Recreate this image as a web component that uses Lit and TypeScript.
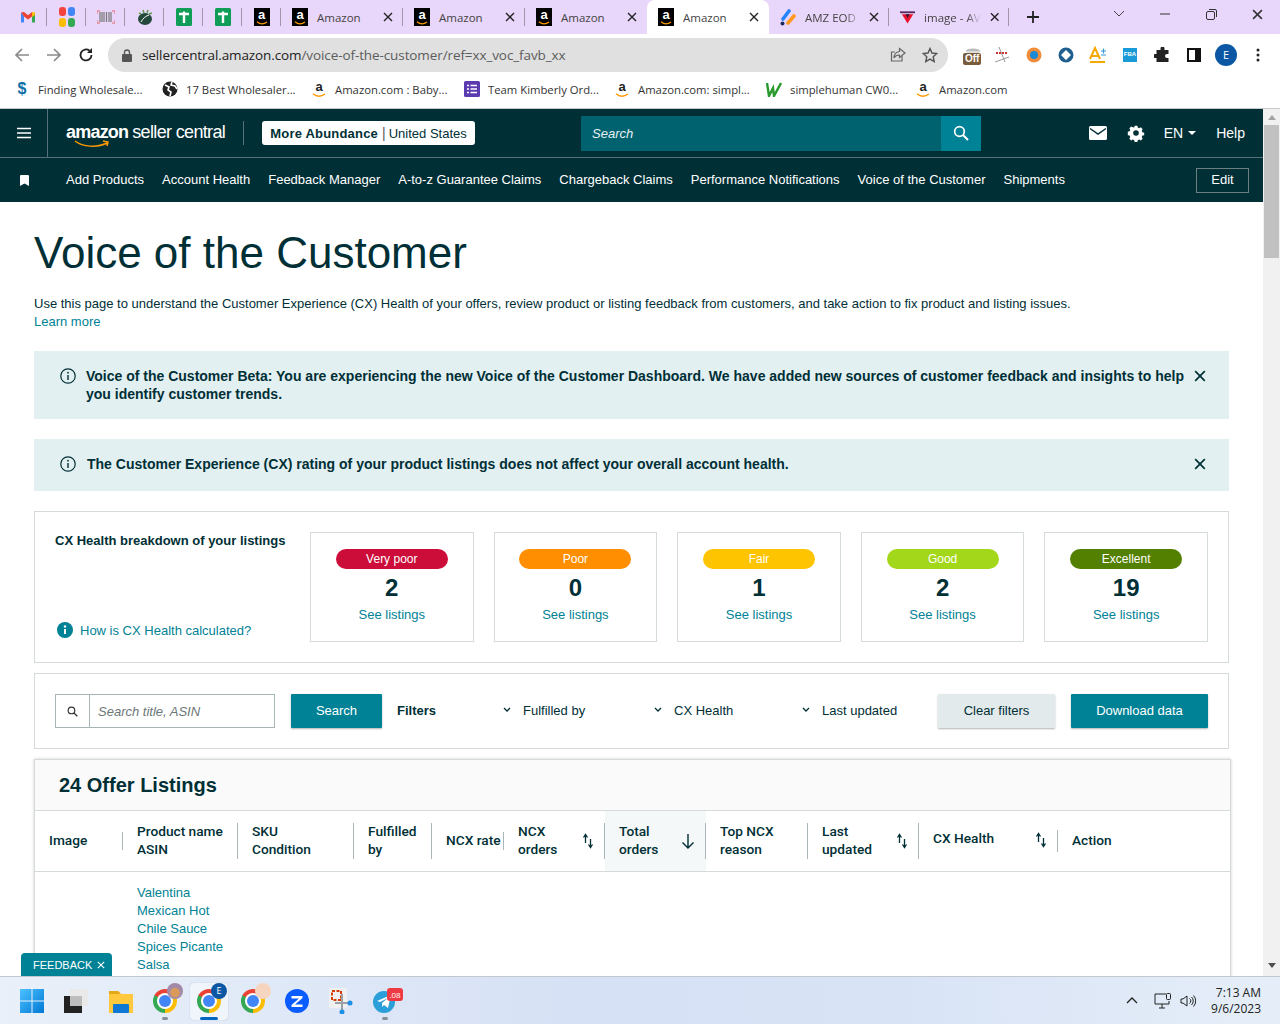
import { LitElement, css, html, svg } from "lit";
import { customElement } from "lit/decorators.js";

const amazonIcon = html`<span class="fav-a"><span>a</span><svg width="12" height="4" viewBox="0 0 12 4"><path d="M1 .8c3 2.4 7 2.4 10 .2" fill="none" stroke="#f90" stroke-width="1.3"/></svg></span>`;
const amazonPlain = html`<span class="fav-plain"><span>a</span><svg width="14" height="5" viewBox="0 0 14 5"><path d="M1 .8c3.5 3 8 3 12 .2" fill="none" stroke="#f90" stroke-width="1.5"/></svg></span>`;

const gmail = svg`<svg width="16" height="16" viewBox="0 0 16 16"><path d="M1 3.5v10h3V7z" fill="#4285f4"/><path d="M15 3.5v10h-3V7z" fill="#34a853"/><path d="M12 3l3 .5V6l-3 2z" fill="#fbbc04"/><path d="M1 3.5L4 3l4 3.2L12 3v4.5L8 10.5 4 7.5z" fill="#ea4335"/></svg>`;
const apps = svg`<svg width="18" height="20" viewBox="0 0 18 20"><rect x="1" width="7" height="9" rx="3" fill="#f4433c"/><rect x="10" width="7" height="9" rx="3" fill="#4285f4"/><rect x="1" y="11" width="7" height="9" rx="3" fill="#fbbc04"/><rect x="10" y="11" width="7" height="9" rx="3" fill="#34a853"/></svg>`;
const barcode = svg`<svg width="18" height="14" viewBox="0 0 18 14"><path d="M3 2v10M5 2v10M7 2v10M9.5 2v10M12 2v10M14 2v10" stroke="#777" stroke-width="1.2"/><path d="M0 4V1h3M15 1h3v3M18 10v3h-3M3 13H0v-3" fill="none" stroke="#e46a6a"/></svg>`;
const leaf = svg`<svg width="18" height="18" viewBox="0 0 18 18"><ellipse cx="9" cy="11" rx="7" ry="6" fill="#24483c"/><path d="M5 14c2-4 5-6 8-7" stroke="#fff" fill="none"/><path d="M3 5l2 1M7 2l1 3M12 2l-1 3M16 5l-3 1" stroke="#5d9a52" stroke-width="1.5"/></svg>`;
const greenT = svg`<svg width="16" height="18" viewBox="0 0 16 18"><rect width="16" height="18" rx="1.5" fill="#0f9d58"/><path d="M3 6h10M8 3.5V15" stroke="#fff" stroke-width="2.4"/></svg>`;
const jira = svg`<svg width="16" height="17" viewBox="0 0 16 17"><path d="M3 10L9 2" stroke="#2684ff" stroke-width="3.6" stroke-linecap="round"/><path d="M8 14l6-7" stroke="#ff991f" stroke-width="3.6" stroke-linecap="round"/><circle cx="2.5" cy="14.5" r="2" fill="#1d2c5e"/></svg>`;
const triangle = svg`<svg width="16" height="16" viewBox="0 0 16 16"><path d="M0 2h16v2H0z" fill="#5a2a5e"/><path d="M2 5h12l-6 10z" fill="#e8112d"/><path d="M6 5h4L8 9z" fill="#24123a"/></svg>`;

const closeX = (c = "#333", s = 10) =>
  svg`<svg width=${s} height=${s} viewBox="0 0 10 10"><path d="M1 1l8 8M9 1l-8 8" stroke=${c} stroke-width="1.4" fill="none"/></svg>`;

const infoOutline = svg`<svg width="16" height="16" viewBox="0 0 16 16"><circle cx="8" cy="8" r="7.2" fill="none" stroke="#002f36" stroke-width="1.2"/><path d="M8 7v5" stroke="#002f36" stroke-width="1.4"/><circle cx="8" cy="4.7" r=".9" fill="#002f36"/></svg>`;
const chevron = svg`<svg width="8" height="6" viewBox="0 0 8 6"><path d="M1 1l3 3 3-3" fill="none" stroke="#002f36" stroke-width="1.3"/></svg>`;
const sortArrows = svg`<svg width="12" height="16" viewBox="0 0 12 16"><path d="M3.5 10V2M1.5 4.5l2-3 2 3" fill="none" stroke="#002f36" stroke-width="1.3"/><path d="M8.5 6v8M6.5 11.5l2 3 2-3" fill="none" stroke="#002f36" stroke-width="1.3"/></svg>`;
const searchIcon = (c: string, s: number) =>
  svg`<svg width=${s} height=${s} viewBox="0 0 16 16"><circle cx="6.5" cy="6.5" r="4.8" fill="none" stroke=${c} stroke-width="1.7"/><path d="M10 10l5 5" stroke=${c} stroke-width="2"/></svg>`;

const pinned = [gmail, apps, barcode, leaf, greenT, greenT, amazonIcon];
const tabs = [
  { icon: amazonIcon, label: "Amazon" },
  { icon: amazonIcon, label: "Amazon" },
  { icon: amazonIcon, label: "Amazon" },
  { icon: amazonIcon, label: "Amazon", active: true },
  { icon: jira, label: "AMZ EOD", fade: true },
  { icon: triangle, label: "image - AV", fade: true },
];

const bookmarks = [
  { w: 148, icon: html`<span class="dollar">$</span>`, label: "Finding Wholesale..." },
  { w: 149, icon: svg`<svg width="16" height="16" viewBox="0 0 16 16"><circle cx="8" cy="8" r="7.5" fill="#222"/><path d="M3 4l4 2-1 3 3 2-1 4M10 1l-1 3 4 1 2 3" fill="none" stroke="#fff" stroke-width="1.6"/></svg>`, label: "17 Best Wholesaler..." },
  { w: 153, icon: amazonPlain, label: "Amazon.com : Baby..." },
  { w: 150, icon: svg`<svg width="16" height="16" viewBox="0 0 16 16"><rect width="16" height="16" rx="1.5" fill="#5b3bb0"/><path d="M6.5 4.5H13M6.5 8H13M6.5 11.5H13M3 4.5h2M3 8h2M3 11.5h2" stroke="#fff" stroke-width="1.4"/></svg>`, label: "Team Kimberly Ord..." },
  { w: 152, icon: amazonPlain, label: "Amazon.com: simpl..." },
  { w: 149, icon: svg`<svg width="16" height="16" viewBox="0 0 16 16"><path d="M1 2l2 13 4-8 1 8 7-13" fill="none" stroke="#2a9a2e" stroke-width="2.4"/></svg>`, label: "simplehuman CW0..." },
  { w: 100, icon: amazonPlain, label: "Amazon.com" },
];

const navItems = ["Add Products", "Account Health", "Feedback Manager", "A-to-z Guarantee Claims", "Chargeback Claims", "Performance Notifications", "Voice of the Customer", "Shipments"];

const ratings = [
  { label: "Very poor", count: "2", cls: "very-poor" },
  { label: "Poor", count: "0", cls: "poor" },
  { label: "Fair", count: "1", cls: "fair" },
  { label: "Good", count: "2", cls: "good" },
  { label: "Excellent", count: "19", cls: "excellent" },
];

const columns = [
  { lines: ["Image"], div: "short" },
  { lines: ["Product name", "ASIN"], div: "tall" },
  { lines: ["SKU", "Condition"], div: "tall" },
  { lines: ["Fulfilled", "by"], div: "tall" },
  { lines: ["NCX rate"], div: "short" },
  { lines: ["NCX", "orders"], div: "tall", sort: true },
  { lines: ["Total", "orders"], div: "tall", sorted: true },
  { lines: ["Top NCX", "reason"], div: "tall" },
  { lines: ["Last", "updated"], div: "tall", sort: true },
  { lines: ["CX Health"], div: "mid", sort: true, raised: true },
  { lines: ["Action"], div: "" },
];

@customElement("app-root")
export class AppRoot extends LitElement {
  static styles = css`
    :host {
      display: block;
      width: 1280px;
      height: 1024px;
      overflow: hidden;
      position: relative;
      font-family: "Liberation Sans", Arial, sans-serif;
      font-size: 13px;
      color: #002f36;
      background: #fff;
    }
    .frame { display: flex; flex-direction: column; height: 1024px; }
    a { color: #008296; text-decoration: none; }

    /* browser chrome */
    .tabstrip { height: 34px; flex: none; background: #e9d6fb; display: flex; align-items: center; padding-left: 8px; font-family: "Open Sans", sans-serif; font-size: 11.5px; color: #444; }
    .pin { width: 39px; height: 34px; display: flex; align-items: center; justify-content: center; position: relative; }
    .pin::after, .tab::after { content: ""; position: absolute; right: 0; top: 8px; height: 18px; width: 1px; background: #a596ae; }
    .tab { width: 122px; height: 34px; display: flex; align-items: center; padding: 0 10px 0 11px; box-sizing: border-box; gap: 9px; position: relative; }
    .tab.narrow { width: 120px; }
    .tab .label { flex: 1; white-space: nowrap; }
    .tab .fade { -webkit-mask-image: linear-gradient(90deg, #000 75%, transparent 100%); mask-image: linear-gradient(90deg, #000 75%, transparent 100%); }
    .tab.active { background: #fff; border-radius: 8px 8px 0 0; }
    .tab.active::after, .tab.nosep::after { display: none; }
    .fav-a { width: 16px; height: 18px; background: #000; display: flex; flex-direction: column; align-items: center; flex: none; color: #fff; font: bold 13px/13px "Liberation Sans", sans-serif; }
    .fav-plain { width: 16px; height: 18px; display: flex; flex-direction: column; align-items: center; flex: none; color: #222; font: bold 13px/13px "Liberation Sans", sans-serif; }
    .newtab { margin-left: 16px; width: 16px; height: 16px; }
    .winbtns { margin-left: auto; display: flex; align-items: center; height: 34px; padding-bottom: 6px; box-sizing: border-box; }
    .winbtns span { width: 46px; display: flex; justify-content: center; }

    .toolbar { height: 38px; flex: none; display: flex; align-items: flex-end; background: #fff; }
    .navbtns { width: 108px; height: 34px; display: flex; align-items: center; padding-left: 14px; box-sizing: border-box; gap: 16px; }
    .omni { width: 840px; height: 34px; border-radius: 17px; background: #e0e0e0; display: flex; align-items: center; box-sizing: border-box; padding: 0 10px 0 14px; font-family: "Open Sans", sans-serif; font-size: 13.5px; color: #5c5c5c; }
    .omni b { font-weight: 400; color: #222; }
    .omni .url { margin-left: 10px; flex: 1; white-space: nowrap; letter-spacing: -0.1px; }
    .omni svg { flex: none; }
    .omni .star { margin-left: 16px; }
    .exts { flex: 1; height: 34px; display: flex; align-items: center; padding-left: 6px; }
    .ext { width: 32px; height: 34px; display: flex; align-items: center; justify-content: center; position: relative; flex: none; }
    .ext.offset { left: 3px; }
    .off { position: absolute; left: 6px; top: 15px; background: #7a5c3a; color: #fff; font: bold 10px/12px "Liberation Sans", sans-serif; padding: 0 2px; border-radius: 2px; }
    .avatar { width: 22px; height: 22px; border-radius: 50%; background: #0b57a4; color: #fff; font: 11px/22px "Open Sans", sans-serif; text-align: center; }

    .bookmarks { height: 36px; flex: none; display: flex; align-items: center; padding: 0 0 2px 14px; box-sizing: border-box; font-family: "Open Sans", sans-serif; font-size: 11.3px; color: #333; }
    .bm { display: flex; align-items: center; gap: 8px; white-space: nowrap; flex: none; }
    .bm > :first-child { flex: none; }
    .dollar { width: 16px; text-align: center; color: #0b6fa8; font: bold 16px "Liberation Sans", sans-serif; }

    /* page area */
    .viewport { flex: 1; min-height: 0; display: flex; border-top: 1px solid #c9c9c9; }
    .page { flex: 1; min-width: 0; overflow: hidden; }
    .scrollbar { width: 17px; background: #f1f1f1; display: flex; flex-direction: column; align-items: center; padding: 3px 0; box-sizing: border-box; justify-content: space-between; position: relative; }
    .thumb { position: absolute; top: 16px; left: 1px; right: 1px; height: 133px; background: #c1c1c1; }
    .arrow-up { border: 4px solid transparent; border-bottom: 5px solid #a3a3a3; border-top: 0; margin-top: 3px; }
    .arrow-down { border: 4px solid transparent; border-top: 5px solid #505050; border-bottom: 0; margin-bottom: 5px; }

    .topbar { height: 48px; background: #002f36; display: flex; align-items: center; color: #fff; border-bottom: 1px solid #56717a; }
    .burger { width: 47px; height: 48px; display: flex; align-items: center; justify-content: center; border-right: 1px solid #56717a; flex: none; }
    .logo { margin-left: 18px; width: 177px; height: 48px; position: relative; display: flex; align-items: center; font-size: 18px; letter-spacing: -0.65px; white-space: nowrap; padding-bottom: 2px; box-sizing: border-box; }
    .logo b { letter-spacing: -0.8px; margin-right: 4px; }
    .smile { position: absolute; left: 8px; top: 31px; }
    .vsep { width: 1px; height: 24px; background: #56717a; flex: none; }
    .chip { margin-left: 18px; width: 213px; height: 24px; box-sizing: border-box; background: #fff; border-radius: 3px; color: #002f36; display: flex; align-items: center; justify-content: center; white-space: nowrap; font-size: 14px; }
    .chip b { font-size: 13px; letter-spacing: .2px; margin-right: 4px; }
    .chip i { font-style: normal; margin-right: 3px; color: #555; }
    .chip span { font-size: 13px; }
    .topsearch { margin-left: 106px; width: 400px; height: 35px; display: flex; flex: none; }
    .topsearch .field { flex: 1; background: #00626f; padding-left: 11px; display: flex; align-items: center; font-style: italic; color: #e6f2f3; }
    .topsearch .go { width: 40px; background: #008296; display: flex; align-items: center; justify-content: center; }
    .topright { margin-left: auto; display: flex; align-items: center; padding-right: 18px; font-size: 14px; }
    .topright .gear { margin-left: 20px; }
    .topright .lang { margin-left: 19px; display: flex; align-items: center; gap: 5px; }
    .caret { border: 4px solid transparent; border-top: 4px solid #fff; border-bottom: 0; }
    .topright .help { margin-left: 20px; }

    .subnav { height: 44px; background: #002f36; display: flex; align-items: center; color: #fff; gap: 18px; padding-right: 14px; }
    .bookmark { width: 48px; display: flex; justify-content: center; }
    .subnav .item { white-space: nowrap; margin-bottom: 2px; }
    .edit { margin-left: auto; width: 53px; height: 25px; box-sizing: border-box; border: 1px solid #6c7f82; padding-bottom: 1px; display: flex; align-items: center; justify-content: center; }

    .content { padding: 27px 34px 0; }
    h1 { margin: 0; font-weight: 400; font-size: 44px; line-height: 48px; color: #002f36; }
    .intro { margin: 18px 0 0; line-height: 18px; color: #002f36; }
    .alert { background: #e3f0f2; display: flex; padding: 16px 23px 16px 26px; margin-top: 20px; font-weight: 700; line-height: 18px; font-size: 14px; }
    .alert .ic { flex: none; width: 26px; height: 18px; display: flex; align-items: center; }
    .alert .txt { flex: 1; }
    .alert .x { flex: none; margin-left: 9px; height: 18px; display: flex; align-items: center; }
    .alert.one { padding-bottom: 18px; }
    .alert.one .ic { width: 27px; }

    .panel { border: 1px solid #d5dbdb; box-sizing: border-box; }
    .health { margin-top: 20px; height: 152px; display: flex; padding: 20px; }
    .health .left { width: 255px; flex: none; display: flex; flex-direction: column; justify-content: space-between; }
    .health h3 { margin: 0; font-size: 13px; line-height: 18px; }
    .how { display: flex; align-items: center; gap: 7px; padding: 0 0 4px 2px; margin-top: auto; }
    .cards { flex: 1; display: grid; grid-template-columns: repeat(5, 1fr); gap: 20px; }
    .card { border: 1px solid #d5dbdb; display: flex; flex-direction: column; align-items: center; padding-top: 16px; box-sizing: border-box; }
    .pill { width: 112px; height: 20px; border-radius: 10px; color: #fff; font-size: 12px; line-height: 20px; text-align: center; }
    .very-poor { background: #cc0c39; }
    .poor { background: #ff8f00; }
    .fair { background: #ffc400; }
    .good { background: #a3d719; }
    .excellent { background: #538000; }
    .count { font-size: 24px; font-weight: 700; line-height: 28px; margin-top: 5px; }
    .see { margin-top: 4px; line-height: 18px; }

    .filters { margin-top: 10px; height: 76px; display: flex; align-items: center; padding: 0 20px; }
    .sbox { width: 220px; height: 34px; display: flex; border: 1px solid #a6b5b5; box-sizing: border-box; flex: none; }
    .sbox .mag { width: 33px; background: #fff; border-right: 1px solid #a6b5b5; display: flex; align-items: center; justify-content: center; }
    .sbox .ph { flex: 1; padding-left: 8px; display: flex; align-items: center; font-style: italic; color: #6c7778; }
    .btn { height: 34px; display: flex; align-items: center; justify-content: center; padding-bottom: 2px; border-radius: 1px; box-sizing: border-box; box-shadow: 0 1px 2px rgba(0, 0, 0, .3); flex: none; }
    .btn.primary { background: #008296; color: #fff; }
    .btn.search { margin-left: 16px; width: 91px; }
    .btn.clear { background: #e3eaeb; width: 117px; margin-left: auto; }
    .btn.download { width: 137px; margin-left: 16px; }
    .flabel { font-weight: 700; margin: 0 0 2px 15px; width: 106px; flex: none; }
    .fitem { display: flex; align-items: center; gap: 12px; flex: none; margin-bottom: 2px; }
    .fitem.a { width: 151px; }
    .fitem.b { width: 148px; }

    .listings { margin-top: 10px; margin-right: -2px; box-shadow: 0 0 3px rgba(0, 0, 0, .2); border: 1px solid #d5dbdb; border-bottom: 0; background: #fff; height: 400px; }
    .listings header { height: 50px; background: #fafafa; border-bottom: 1px solid #d5dbdb; display: flex; align-items: center; padding-left: 24px; font-size: 20px; font-weight: 700; }
    .thead { height: 60px; display: grid; grid-template-columns: 88px 115px 116px 78px 72px 101px 101px 102px 111px 139px 1fr; border-bottom: 1px solid #d5dbdb; font-family: Roboto, "Liberation Sans", sans-serif; font-weight: 500; font-size: 13.7px; line-height: 18px; }
    .th { display: flex; align-items: center; padding: 0 0 2px 14px; position: relative; white-space: nowrap; box-sizing: border-box; }
    .th::after { content: ""; position: absolute; right: 0; top: 50%; width: 1px; background: #a9b7b8; }
    .th.tall::after { height: 36px; margin-top: -18px; }
    .th.short::after { height: 18px; margin-top: -9px; }
    .th.mid::after { height: 22px; margin-top: -11px; }
    .th .sort { position: absolute; right: 11px; top: 50%; margin-top: -8px; display: flex; }
    .th.sorted { background: #f4f8f9; }
    .th.raised .text { margin-top: -4px; }
    .th.raised .sort { margin-top: -9px; }
    .rowcell { padding: 12px 0 0 102px; width: 100px; line-height: 18px; }

    .feedback { position: absolute; left: 21px; top: 953px; width: 91px; height: 23px; background: #008296; color: #fff; border-radius: 4px 4px 0 0; display: flex; align-items: center; gap: 5px; padding-left: 12px; box-sizing: border-box; font-size: 11px; }

    /* taskbar */
    .taskbar { height: 48px; flex: none; background: linear-gradient(90deg, #e9f0f9, #d6e1f5 45%, #d8e3f6 70%, #e5eef8); border-top: 1px solid #c3c8cf; box-sizing: border-box; display: flex; align-items: center; padding-left: 10px; position: relative; }
    .ti { width: 44px; height: 44px; display: flex; align-items: center; justify-content: center; position: relative; flex: none; }
    .ti.view { margin-right: 1px; }
    .ti.active::before { content: ""; position: absolute; left: 3px; right: 3px; top: 4px; bottom: 3px; background: #f0f4fb; border-radius: 4px; box-shadow: 0 0 1px rgba(0, 0, 0, .25); }
    .ti.active::after { content: ""; position: absolute; left: 13px; right: 13px; bottom: 3px; height: 3px; background: #0067c0; border-radius: 2px; }
    .ti.open::after { content: ""; position: absolute; left: 19px; right: 19px; bottom: 3px; height: 3px; background: #8a8f96; border-radius: 2px; }
    .chrome { width: 24px; height: 24px; border-radius: 50%; position: relative; background: conic-gradient(from -60deg, #ea4335 0 120deg, #fbbc04 120deg 240deg, #34a853 240deg 360deg); }
    .chrome::after { content: ""; position: absolute; inset: 6px; border-radius: 50%; background: #4285f4; box-shadow: 0 0 0 2px #fff; }
    .badge { position: absolute; z-index: 1; border-radius: 50%; width: 16px; height: 16px; right: 4px; top: 4px; font: 9px/16px "Open Sans", sans-serif; text-align: center; color: #fff; }
    .badge.photo { background: radial-gradient(circle at 50% 60%, #d99a5a 0 35%, #a48aa8 40%); }
    .badge.e { background: #0b57a4; }
    .badge.person { background: #f5d5c0; }
    .tg-badge { position: absolute; z-index: 1; left: 24px; top: 9px; width: 16px; height: 13px; background: #ee3a43; border-radius: 3px; color: #fff; font: 8px/13px "Open Sans", sans-serif; text-align: center; }
    .tray { margin-left: auto; display: flex; align-items: center; padding-right: 19px; }
    .tray .net { margin-left: 16px; }
    .tray .vol { margin-left: 8px; }
    .clock { margin-left: 15px; text-align: right; font-family: "Open Sans", sans-serif; font-size: 12px; line-height: 16px; color: #222; }
  `;

  private chromeIcon(badge?: unknown) {
    return html`<span class="chrome"></span>${badge}`;
  }

  render() {
    return html`
      <div class="frame">
        ${this.renderBrowser()}
        <div class="viewport">
          <div class="page">
            ${this.renderSellerNav()}
            <div class="content">
              <h1>Voice of the Customer</h1>
              <p class="intro">
                Use this page to understand the Customer Experience (CX) Health of your offers, review product or listing feedback from customers, and take action to fix product and listing issues.<br />
                <a>Learn more</a>
              </p>
              <div class="alert">
                <span class="ic">${infoOutline}</span>
                <span class="txt">Voice of the Customer Beta: You are experiencing the new Voice of the Customer Dashboard. We have added new sources of customer feedback and insights to help you identify customer trends.</span>
                <span class="x">${closeX("#002f36", 12)}</span>
              </div>
              <div class="alert one">
                <span class="ic">${infoOutline}</span>
                <span class="txt">The Customer Experience (CX) rating of your product listings does not affect your overall account health.</span>
                <span class="x">${closeX("#002f36", 12)}</span>
              </div>
              ${this.renderHealth()}
              ${this.renderFilters()}
              ${this.renderListings()}
            </div>
          </div>
          <div class="scrollbar">
            <span class="arrow-up"></span>
            <span class="thumb"></span>
            <span class="arrow-down"></span>
          </div>
        </div>
        ${this.renderTaskbar()}
      </div>
      <div class="feedback">FEEDBACK ${closeX("#fff", 8)}</div>
    `;
  }

  renderBrowser() {
    return html`
      <div class="tabstrip">
        ${pinned.map((p) => html`<div class="pin">${p}</div>`)}
        ${tabs.map(
          (t, i) => html`<div class="tab ${t.active ? "active" : ""} ${i === 2 ? "nosep" : ""} ${t.fade ? "narrow" : ""}">
            ${t.icon}<span class="label ${t.fade ? "fade" : ""}">${t.label}</span>${closeX("#222", 10)}
          </div>`
        )}
        <svg class="newtab" viewBox="0 0 16 16"><path d="M8 2v12M2 8h12" stroke="#222" stroke-width="1.8"/></svg>
        <div class="winbtns">
          <span><svg width="12" height="8" viewBox="0 0 12 8"><path d="M1 1l5 5 5-5" fill="none" stroke="#444"/></svg></span>
          <span><svg width="10" height="2" viewBox="0 0 10 2"><path d="M0 1h10" stroke="#333"/></svg></span>
          <span><svg width="11" height="11" viewBox="0 0 11 11"><rect x=".5" y="2.5" width="8" height="8" rx="1.5" fill="none" stroke="#333"/><path d="M3 .5h6a1.5 1.5 0 0 1 1.500 1.500v6" fill="none" stroke="#333"/></svg></span>
          <span>${closeX("#333", 11)}</span>
        </div>
      </div>
      <div class="toolbar">
        <div class="navbtns">
          <svg width="16" height="16" viewBox="0 0 16 16"><path d="M15 8H2M8 2L2 8l6 6" fill="none" stroke="#8b8b8b" stroke-width="1.7"/></svg>
          <svg width="16" height="16" viewBox="0 0 16 16"><path d="M1 8h13M8 2l6 6-6 6" fill="none" stroke="#8b8b8b" stroke-width="1.7"/></svg>
          <svg width="16" height="16" viewBox="0 0 16 16"><path d="M13.5 8A5.5 5.5 0 1 1 11.5 3.7" fill="none" stroke="#222" stroke-width="1.8"/><path d="M14 1v5H9z" fill="#222"/></svg>
        </div>
        <div class="omni">
          <svg width="10" height="13" viewBox="0 0 10 13"><rect y="5" width="10" height="8" rx="1" fill="#555"/><path d="M2.5 5V3.5a2.5 2.5 0 0 1 5 0V5" fill="none" stroke="#555" stroke-width="1.3"/></svg>
          <span class="url"><b>sellercentral.amazon.com</b>/voice-of-the-customer/ref=xx_voc_favb_xx</span>
          <svg width="16" height="16" viewBox="0 0 16 16"><path d="M12 9v5H1.5V5H5" fill="none" stroke="#666" stroke-width="1.2"/><path d="M9.5 1.5L15 6l-5.5 4.500V8C7 8 5 9 3.800 11 4 7.500 6 5 9.500 4.500z" fill="none" stroke="#666" stroke-width="1.2"/></svg>
          <svg class="star" width="16" height="16" viewBox="0 0 16 16"><path d="M8 1.500l2 4.500 4.800.5-3.600 3.200 1 4.800L8 12.100l-4.200 2.400 1-4.800L1.200 6.500 6 6z" fill="none" stroke="#555" stroke-width="1.4"/></svg>
        </div>
        <div class="exts">
          <span class="ext offset"><svg width="16" height="14" viewBox="0 0 16 14"><ellipse cx="8" cy="3" rx="7" ry="2.5" fill="#bbb"/><rect x="2" y="3" width="12" height="9" fill="#ddd"/></svg><span class="off">Off</span></span>
          <span class="ext"><svg width="18" height="18" viewBox="0 0 18 18"><path d="M6 1l6 15M2 16l14-5" stroke="#999" fill="none"/><path d="M3 7h12" stroke="#c33" stroke-width="2" stroke-dasharray="2 1"/></svg></span>
          <span class="ext"><svg width="16" height="16" viewBox="0 0 16 16"><circle cx="8" cy="8" r="7.5" fill="#f08c3a"/><circle cx="8" cy="8" r="4" fill="#1a8ad4"/></svg></span>
          <span class="ext"><svg width="16" height="16" viewBox="0 0 16 16"><circle cx="8" cy="8" r="7.5" fill="#1f5f8f"/><path d="M8 3l2.500 2.500L8 8 5.500 5.500zM8 8l2.500 2.500L8 13l-2.500-2.500zM3 8l2.500-2.500L8 8l-2.500 2.500zM13 8l-2.500 2.500L8 8l2.500-2.500z" fill="#fff"/></svg></span>
          <span class="ext"><svg width="18" height="18" viewBox="0 0 18 18"><path d="M1 13L6 2l5 11M3 10h6" fill="none" stroke="#f5a800" stroke-width="2"/><path d="M12 5h5M14.500 2.500v5M12 9h5" stroke="#3a9ad4" stroke-width="1.2"/><path d="M1 16h15" stroke="#f5a800" stroke-width="2"/></svg></span>
          <span class="ext"><svg width="14" height="14" viewBox="0 0 14 14"><rect width="14" height="14" fill="#1a9bd8"/><text x="7" y="8" font-size="6" font-weight="700" font-family="Liberation Sans" text-anchor="middle" fill="#fff">FBA</text></svg></span>
          <span class="ext"><svg width="16" height="16" viewBox="0 0 16 16"><path d="M6 1.500a2 2 0 0 1 4 0V3h4v4h-1.500a2 2 0 0 0 0 4H14v4H2v-4H.5a2 2 0 0 1 0-4H2V3h4z" fill="#222" transform="translate(.5 0)"/></svg></span>
          <span class="ext"><svg width="14" height="14" viewBox="0 0 14 14"><rect x="1" y="1" width="12" height="12" fill="none" stroke="#111" stroke-width="2"/><rect x="8" y="1" width="5" height="12" fill="#111"/></svg></span>
          <span class="ext"><span class="avatar">E</span></span>
          <span class="ext"><svg width="4" height="14" viewBox="0 0 4 14"><circle cx="2" cy="2" r="1.5" fill="#222"/><circle cx="2" cy="7" r="1.5" fill="#222"/><circle cx="2" cy="12" r="1.5" fill="#222"/></svg></span>
        </div>
      </div>
      <div class="bookmarks">
        ${bookmarks.map((b) => html`<span class="bm" style="width:${b.w}px">${b.icon}<span>${b.label}</span></span>`)}
      </div>
    `;
  }

  renderSellerNav() {
    return html`
      <div class="topbar">
        <div class="burger"><svg width="16" height="12" viewBox="0 0 16 12"><path d="M1 1.500h14M1 6h14M1 10.500h14" stroke="#fff" stroke-width="1.7"/></svg></div>
        <div class="logo">
          <b>amazon</b>seller central
          <svg class="smile" width="36" height="8" viewBox="0 0 36 8"><path d="M1 1c8 6 22 7 32 2M29 1l5 1-1 4" fill="none" stroke="#f90" stroke-width="1.5"/></svg>
        </div>
        <span class="vsep"></span>
        <div class="chip"><b>More Abundance</b><i>|</i><span>United States</span></div>
        <div class="topsearch">
          <div class="field">Search</div>
          <div class="go">${searchIcon("#fff", 16)}</div>
        </div>
        <div class="topright">
          <svg width="18" height="14" viewBox="0 0 18 14"><rect width="18" height="14" rx="1.5" fill="#fff"/><path d="M1 2.500l8 5.500 8-5.500" fill="none" stroke="#002f36" stroke-width="1.5"/></svg>
          <svg class="gear" width="18" height="18" viewBox="0 0 18 18"><path d="M7.500 1h3l.5 2 1.500.7 1.900-1 2 2-1 1.900.7 1.500 2 .5v2.800l-2 .5-.7 1.500 1 1.900-2 2-1.900-1-1.500.7-.5 2h-3l-.5-2-1.500-.7-1.900 1-2-2 1-1.900-.7-1.500-2-.5V7.600l2-.5.7-1.500-1-1.900 2-2 1.900 1L7 3z" fill="#fff" transform="translate(.9 .9) scale(.9)"/><circle cx="9" cy="9" r="2.800" fill="#002f36"/></svg>
          <span class="lang">EN <span class="caret"></span></span>
          <span class="help">Help</span>
        </div>
      </div>
      <div class="subnav">
        <span class="bookmark"><svg width="9" height="11" viewBox="0 0 9 11"><path d="M0 1a1 1 0 0 1 1-1h7a1 1 0 0 1 1 1v10L4.500 8.500 0 11z" fill="#fff"/></svg></span>
        ${navItems.map((n) => html`<span class="item">${n}</span>`)}
        <span class="edit">Edit</span>
      </div>
    `;
  }

  renderHealth() {
    return html`
      <div class="panel health">
        <div class="left">
          <h3>CX Health breakdown of your listings</h3>
          <a class="how">
            <svg width="16" height="16" viewBox="0 0 16 16"><circle cx="8" cy="8" r="8" fill="#008296"/><path d="M8 7v5" stroke="#fff" stroke-width="2"/><circle cx="8" cy="4.500" r="1.200" fill="#fff"/></svg>
            How is CX Health calculated?
          </a>
        </div>
        <div class="cards">
          ${ratings.map(
            (r) => html`<div class="card">
              <div class="pill ${r.cls}">${r.label}</div>
              <div class="count">${r.count}</div>
              <a class="see">See listings</a>
            </div>`
          )}
        </div>
      </div>
    `;
  }

  renderFilters() {
    return html`
      <div class="panel filters">
        <div class="sbox">
          <span class="mag">${searchIcon("#333", 11)}</span>
          <span class="ph">Search title, ASIN</span>
        </div>
        <div class="btn primary search">Search</div>
        <div class="flabel">Filters</div>
        <div class="fitem a">${chevron}<span>Fulfilled by</span></div>
        <div class="fitem b">${chevron}<span>CX Health</span></div>
        <div class="fitem">${chevron}<span>Last updated</span></div>
        <div class="btn clear">Clear filters</div>
        <div class="btn primary download">Download data</div>
      </div>
    `;
  }

  renderListings() {
    return html`
      <div class="listings">
        <header>24 Offer Listings</header>
        <div class="thead">
          ${columns.map(
            (c) => html`<div class="th ${c.div} ${c.sorted ? "sorted" : ""} ${c.raised ? "raised" : ""}">
              <span class="text">${c.lines.map((l, i) => html`${i ? html`<br />` : ""}${l}`)}</span>
              ${c.sort ? html`<span class="sort">${sortArrows}</span>` : ""}
              ${c.sorted
                ? html`<span class="sort"><svg width="14" height="16" viewBox="0 0 14 16"><path d="M7 1v14M1.500 9.500L7 15l5.500-5.500" fill="none" stroke="#002f36" stroke-width="1.4"/></svg></span>`
                : ""}
            </div>`
          )}
        </div>
        <div class="rowcell"><a>Valentina Mexican Hot Chile Sauce Spices Picante Salsa</a></div>
      </div>
    `;
  }

  renderTaskbar() {
    return html`
      <div class="taskbar">
        <div class="ti">
          <svg width="24" height="24" viewBox="0 0 24 24"><defs><linearGradient id="w" x1="0" y1="0" x2="1" y2="1"><stop offset="0" stop-color="#4cc2ff"/><stop offset="1" stop-color="#0078d4"/></linearGradient></defs><path d="M0 0h11.500v11.500H0zM12.500 0H24v11.500H12.500zM0 12.500h11.500V24H0zM12.500 12.500H24V24H12.500z" fill="url(#w)"/></svg>
        </div>
        <div class="ti view">
          <svg width="24" height="24" viewBox="0 0 24 24"><rect y="7" width="18" height="17" fill="#222"/><rect x="6" y="0" width="18" height="17" fill="#e9e9e9"/><rect x="6" y="7" width="12" height="10" fill="#bdbdbd"/></svg>
        </div>
        <div class="ti">
          <svg width="24" height="24" viewBox="0 0 24 24"><path d="M0 2h9l3 3h12v19H0z" fill="#ffc83d"/><path d="M0 2h9l3 3H0z" fill="#e6a817"/><rect x="4" y="15" width="16" height="9" rx="1" fill="#0f78d4"/></svg>
        </div>
        <div class="ti open">${this.chromeIcon(html`<span class="badge photo"></span>`)}</div>
        <div class="ti active">${this.chromeIcon(html`<span class="badge e">E</span>`)}</div>
        <div class="ti">${this.chromeIcon(html`<span class="badge person"></span>`)}</div>
        <div class="ti">
          <svg width="24" height="24" viewBox="0 0 24 24"><circle cx="12" cy="12" r="12" fill="#0b5cff"/><path d="M6.500 7h11v2L10 15.500h7.500V18h-11v-2l7.500-6.500H6.500z" fill="#fff"/></svg>
        </div>
        <div class="ti">
          <svg width="24" height="26" viewBox="0 0 24 26"><rect width="18" height="20" rx="1" fill="#f0f0f0"/><rect x="3" y="3" width="9" height="9" fill="none" stroke="#d83b01" stroke-width="2" stroke-dasharray="3 1.5"/><path d="M13 6v18M6 15h15" stroke="#9aa0a6" stroke-width="2"/><circle cx="21" cy="15" r="2.500" fill="#1a8fe3"/><circle cx="13" cy="24" r="2.500" fill="#1a8fe3"/></svg>
        </div>
        <div class="ti open">
          <svg width="24" height="24" viewBox="0 0 24 24"><circle cx="11" cy="13" r="11" fill="#2a9fd9"/><path d="M4 12l14-6-3 13-4-3-2 2v-4l6-5-8 4z" fill="#fff"/></svg>
          <span class="tg-badge">.08</span>
        </div>
        <div class="tray">
          <svg width="12" height="7" viewBox="0 0 12 7"><path d="M1 6l5-5 5 5" fill="none" stroke="#222" stroke-width="1.3"/></svg>
          <svg class="net" width="18" height="16" viewBox="0 0 18 16"><path d="M12 1H1v10h14V8M5 15h6M8 11v4" fill="none" stroke="#222"/><rect x="12.500" y=".5" width="4" height="6" rx="1" fill="none" stroke="#222"/></svg>
          <svg class="vol" width="16" height="14" viewBox="0 0 16 14"><path d="M1 5v4h2l4 3V2L3 5zM9.500 4.500a3 3 0 0 1 0 5M11.500 3a5.500 5.500 0 0 1 0 8M13.500 1.500a8 8 0 0 1 0 11" fill="none" stroke="#222"/></svg>
          <div class="clock">7:13 AM<br />9/6/2023</div>
        </div>
      </div>
    `;
  }
}
